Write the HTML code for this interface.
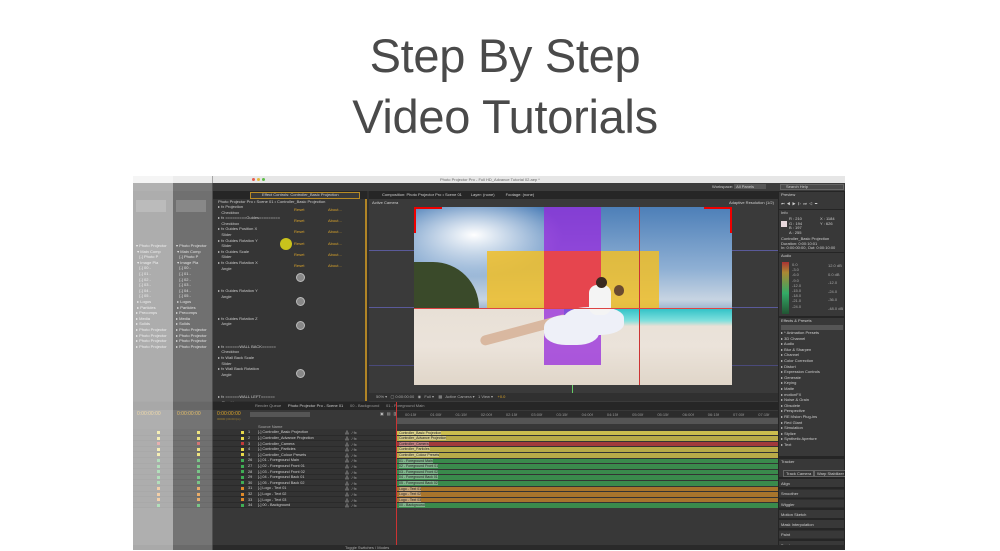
<!DOCTYPE html>
<html><head><meta charset="utf-8"><style>
*{margin:0;padding:0;box-sizing:border-box}
body{width:1000px;height:550px;background:#fff;position:relative;overflow:hidden;font-family:"Liberation Sans",sans-serif}
.a{position:absolute}
.t{font-size:4px;color:#cfcfcf;white-space:nowrap}
.o{color:#d9a32a}
h1{position:absolute;left:5px;width:1000px;text-align:center;font-weight:normal;color:#4a4a4a;font-size:47px;line-height:50px;letter-spacing:-0.3px}
</style></head><body>
<h1 style="top:31px">Step By Step</h1>
<h1 style="top:92px">Video Tutorials</h1>

<!-- window -->
<div class="a" style="left:133px;top:176px;width:712px;height:374px;background:#2f2f2f"></div>
<div class="a" style="left:133px;top:176px;width:712px;height:7px;background:#e6e6e6"></div>
<div class="a t" style="left:440px;top:177px;color:#666;font-size:4px">Photo Projector Pro - Full HD_Advance Tutorial 02.aep *</div>
<div class="a" style="left:133px;top:183px;width:712px;height:8px;background:#3c3c3c"></div>
<div class="a" style="left:252px;top:178px;width:3px;height:3px;border-radius:2px;background:#e65b4f"></div>
<div class="a" style="left:257px;top:178px;width:3px;height:3px;border-radius:2px;background:#e5b93c"></div>
<div class="a" style="left:262px;top:178px;width:3px;height:3px;border-radius:2px;background:#5cbc48"></div>
<div class="a t" style="left:712px;top:184px">Workspace: <span style="background:#555;padding:0 12px 0 2px">All Panels</span></div>
<div class="a" style="left:780px;top:184px;width:64px;height:6px;background:#4a4a4a;border:1px solid #666"></div>
<div class="a t" style="left:786px;top:184px">Search Help</div>

<!-- left project panels (ghosted) -->
<div class="a" style="left:133px;top:191px;width:80px;height:210px;background:#333"></div>
<div class="a t" style="left:136px;top:243px;line-height:5.6px;color:#ddd">▾ Photo Projector<br>&nbsp;▾ Main Comp<br>&nbsp;&nbsp;&nbsp;[-] Photo P<br>&nbsp;▾ Image Pla<br>&nbsp;&nbsp;&nbsp;[-] 00 -<br>&nbsp;&nbsp;&nbsp;[-] 01 -<br>&nbsp;&nbsp;&nbsp;[-] 02 -<br>&nbsp;&nbsp;&nbsp;[-] 03 -<br>&nbsp;&nbsp;&nbsp;[-] 04 -<br>&nbsp;&nbsp;&nbsp;[-] 05 -<br>&nbsp;▸ Logos<br>&nbsp;▸ Particles<br>▸ Precomps<br>▸ Media<br>▸ Solids<br>▸ Photo Projector<br>▸ Photo Projector<br>▸ Photo Projector<br>▸ Photo Projector</div>
<div class="a t" style="left:176px;top:243px;line-height:5.6px;color:#ddd">▾ Photo Projector<br>&nbsp;▾ Main Comp<br>&nbsp;&nbsp;&nbsp;[-] Photo P<br>&nbsp;▾ Image Pla<br>&nbsp;&nbsp;&nbsp;[-] 00 -<br>&nbsp;&nbsp;&nbsp;[-] 01 -<br>&nbsp;&nbsp;&nbsp;[-] 02 -<br>&nbsp;&nbsp;&nbsp;[-] 03 -<br>&nbsp;&nbsp;&nbsp;[-] 04 -<br>&nbsp;&nbsp;&nbsp;[-] 05 -<br>&nbsp;▸ Logos<br>&nbsp;▸ Particles<br>▸ Precomps<br>▸ Media<br>▸ Solids<br>▸ Photo Projector<br>▸ Photo Projector<br>▸ Photo Projector<br>▸ Photo Projector</div>
<div class="a" style="left:136px;top:200px;width:30px;height:12px;background:#555"></div>
<div class="a" style="left:176px;top:200px;width:30px;height:12px;background:#555"></div>
<!-- effect controls -->
<div class="a" style="left:213px;top:191px;width:154px;height:8px;background:#262626"></div>
<div class="a" style="left:250px;top:192px;width:110px;height:7px;background:#3a3a3a;border:1px solid #b88b24"></div>
<div class="a t" style="left:262px;top:192px">Effect Controls: Controller_Basic Projection</div>
<div class="a" style="left:213px;top:199px;width:154px;height:202px;background:#353535;border-right:2px solid #b08426"></div>
<div class="a t" style="left:218px;top:199px">Photo Projector Pro • Scene 01 • Controller_Basic Projection</div>
<div class="a" style="left:213px;top:204px;width:150px;height:197px;font-size:4px;line-height:5.6px;color:#ccc">
<div style="position:relative;padding-left:5px">
▸ fx Projection<br>&nbsp;&nbsp;&nbsp;Checkbox<br>▸ fx =========Guides=========<br>&nbsp;&nbsp;&nbsp;Checkbox<br>▸ fx Guides Position X<br>&nbsp;&nbsp;&nbsp;Slider<br>▸ fx Guides Rotation Y<br>&nbsp;&nbsp;&nbsp;Slider<br>▸ fx Guides Scale<br>&nbsp;&nbsp;&nbsp;Slider<br>▸ fx Guides Rotation X<br>&nbsp;&nbsp;&nbsp;Angle<br><br><br><br>▸ fx Guides Rotation Y<br>&nbsp;&nbsp;&nbsp;Angle<br><br><br><br>▸ fx Guides Rotation Z<br>&nbsp;&nbsp;&nbsp;Angle<br><br><br><br>▸ fx ======WALL BACK======<br>&nbsp;&nbsp;&nbsp;Checkbox<br>▸ fx Wall Back Scale<br>&nbsp;&nbsp;&nbsp;Slider<br>▸ fx Wall Back Rotation<br>&nbsp;&nbsp;&nbsp;Angle<br><br><br><br>▸ fx ======WALL LEFT======<br>&nbsp;&nbsp;&nbsp;Checkbox<br>▸ fx Wall Left Scale X<br>&nbsp;&nbsp;&nbsp;Slider
</div></div>
<div class="a t o" style="left:294px;top:204px;line-height:11.2px">Reset<br>Reset<br>Reset<br>Reset<br>Reset<br>Reset</div>
<div class="a t o" style="left:328px;top:204px;line-height:11.2px">About...<br>About...<br>About...<br>About...<br>About...<br>About...</div>
<div class="a" style="left:280px;top:238px;width:12px;height:12px;border-radius:6px;background:#d9d21a;opacity:.9"></div>
<div class="a" style="left:296px;top:273px;width:9px;height:9px;border-radius:5px;background:#888;border:1px solid #bbb"></div>
<div class="a" style="left:296px;top:297px;width:9px;height:9px;border-radius:5px;background:#888;border:1px solid #bbb"></div>
<div class="a" style="left:296px;top:321px;width:9px;height:9px;border-radius:5px;background:#888;border:1px solid #bbb"></div>
<div class="a" style="left:296px;top:369px;width:9px;height:9px;border-radius:5px;background:#888;border:1px solid #bbb"></div>

<!-- composition -->
<div class="a" style="left:369px;top:191px;width:409px;height:8px;background:#262626"></div>
<div class="a t" style="left:382px;top:192px">Composition: Photo Projector Pro • Scene 01 &nbsp;&nbsp;&nbsp;&nbsp;&nbsp;&nbsp; Layer: (none) &nbsp;&nbsp;&nbsp;&nbsp;&nbsp;&nbsp;&nbsp;&nbsp; Footage: (none)</div>
<div class="a" style="left:369px;top:199px;width:409px;height:203px;background:#3a3a3a"></div>
<div class="a t" style="left:372px;top:200px">Active Camera</div>
<div class="a t" style="left:729px;top:200px">Adaptive Resolution (1/2)</div>
<div class="a" style="left:369px;top:250px;width:409px;height:58px;border:1px solid #5a5a9a;border-left:none;border-right:none"></div>
<div class="a" style="left:369px;top:365px;width:409px;height:1px;background:#4a4a7a"></div>
<!-- photo -->
<div class="a" style="left:414px;top:207px;width:318px;height:178px;overflow:hidden;background:linear-gradient(#4d7fb8,#8fb0d4 35%,#c7d4e2 52%,#9fb6cf 57%)">
 <div class="a" style="left:0;top:0;width:150px;height:70px;background:radial-gradient(ellipse at 40% 40%,#fff,rgba(255,255,255,0) 70%)"></div>
 <div class="a" style="left:0;top:55px;width:65px;height:46px;background:#3a4a2a;border-radius:0 60px 0 0"></div>
 <div class="a" style="left:0;top:101px;width:318px;height:77px;background:linear-gradient(#e8e0d6,#ebe3da 50%,#e0d6c9)"></div>
 <div class="a" style="left:150px;top:101px;width:168px;height:18px;background:linear-gradient(#2cc0c6,#7fe0dd 70%,#e8e0d6)"></div>
 <div class="a" style="left:130px;top:0;width:57px;height:158px;background:rgba(150,40,220,.75)"></div>
 <div class="a" style="left:73px;top:44px;width:172px;height:57px;background:rgba(240,190,40,.85)"></div>
 <div class="a" style="left:130px;top:44px;width:57px;height:57px;background:rgba(230,50,80,.85)"></div>
 <div class="a" style="left:65px;top:118px;width:90px;height:10px;background:#d9b8a0;border-radius:5px;transform:rotate(-15deg)"></div>
 <div class="a" style="left:130px;top:108px;width:55px;height:30px;background:#eef0f8;border-radius:40%"></div>
 <div class="a" style="left:150px;top:100px;width:60px;height:28px;background:#eef0f8;border-radius:40%"></div>
 <div class="a" style="left:175px;top:78px;width:22px;height:30px;background:#f4f4f4;border-radius:8px"></div>
 <div class="a" style="left:182px;top:70px;width:11px;height:11px;background:#3a2a20;border-radius:6px"></div>
 <div class="a" style="left:200px;top:78px;width:10px;height:11px;background:#6a4a30;border-radius:6px"></div>
 <div class="a" style="left:225px;top:0;width:1px;height:178px;background:#c33"></div>
</div>
<div class="a" style="left:414px;top:207px;width:28px;height:2px;background:#e00"></div>
<div class="a" style="left:414px;top:207px;width:2px;height:26px;background:#e00"></div>
<div class="a" style="left:704px;top:207px;width:28px;height:2px;background:#e00"></div>
<div class="a" style="left:730px;top:207px;width:2px;height:26px;background:#e00"></div>
<div class="a" style="left:414px;top:308px;width:318px;height:1px;background:#d44"></div>
<div class="a" style="left:572px;top:385px;width:1px;height:12px;background:#6c6"></div>
<div class="a" style="left:369px;top:393px;width:409px;height:8px;background:#303030"></div>
<div class="a t" style="left:376px;top:394px;color:#aaa">50% ▾ &nbsp; ▢ 0:00:00:00 &nbsp; ◉ &nbsp; Full ▾ &nbsp;&nbsp; ▦ &nbsp; Active Camera ▾ &nbsp; 1 View ▾ &nbsp;&nbsp; <span class="o">+0.0</span></div>

<!-- right column -->
<div class="a" style="left:778px;top:191px;width:67px;height:359px;background:#252525"></div>
<div class="a" style="left:779px;top:192px;width:65px;height:17px;background:#383838"></div>
<div class="a t" style="left:781px;top:192px">Preview</div>
<div class="a t" style="left:781px;top:201px;letter-spacing:2px">⏮◀▶▷⏭◁▭</div>
<div class="a" style="left:779px;top:210px;width:65px;height:42px;background:#383838"></div>
<div class="a t" style="left:781px;top:210px">Info</div>
<div class="a" style="left:781px;top:221px;width:6px;height:6px;background:#e8d8dc"></div>
<div class="a t" style="left:789px;top:217px;line-height:4.5px">R : 210<br>G : 194<br>B : 197<br>A : 255</div>
<div class="a t" style="left:820px;top:217px;line-height:4.5px">X : 1184<br>Y : 626</div>
<div class="a t" style="left:781px;top:237px;line-height:4.5px">Controller_Basic Projection<br>Duration: 0:00:10:01<br>In: 0:00:00:00, Out: 0:00:10:00</div>
<div class="a" style="left:779px;top:253px;width:65px;height:63px;background:#383838"></div>
<div class="a t" style="left:781px;top:253px">Audio</div>
<div class="a" style="left:782px;top:262px;width:7px;height:52px;background:linear-gradient(#a33,#a83 20%,#3a6 60%,#253)"></div>
<div class="a t" style="left:792px;top:262px;line-height:5.2px;color:#aaa">0.0<br>-3.0<br>-6.0<br>-9.0<br>-12.0<br>-15.0<br>-18.0<br>-21.0<br>-24.0</div>
<div class="a t" style="left:828px;top:262px;line-height:8.5px;color:#aaa">12.0 dB<br>0.0 dB<br>-12.0<br>-24.0<br>-36.0<br>-48.0 dB</div>
<div class="a" style="left:779px;top:318px;width:65px;height:138px;background:#383838"></div>
<div class="a t" style="left:781px;top:318px">Effects &amp; Presets</div>
<div class="a" style="left:781px;top:325px;width:62px;height:5px;background:#555"></div>
<div class="a t" style="left:781px;top:330px;line-height:5.6px">▸ * Animation Presets<br>▸ 3D Channel<br>▸ Audio<br>▸ Blur &amp; Sharpen<br>▸ Channel<br>▸ Color Correction<br>▸ Distort<br>▸ Expression Controls<br>▸ Generate<br>▸ Keying<br>▸ Matte<br>▸ motionFX<br>▸ Noise &amp; Grain<br>▸ Obsolete<br>▸ Perspective<br>▸ RE:Vision Plug-ins<br>▸ Red Giant<br>▸ Simulation<br>▸ Stylize<br>▸ Synthetic Aperture<br>▸ Text</div>
<div class="a" style="left:779px;top:459px;width:65px;height:18px;background:#383838"></div>
<div class="a t" style="left:781px;top:459px">Tracker</div>
<div class="a t" style="left:783px;top:470px;border:1px solid #666;padding:0 2px">Track Camera</div>
<div class="a t" style="left:814px;top:470px;border:1px solid #666;padding:0 2px">Warp Stabilizer</div>
<div class="a" style="left:779px;top:479px;width:65px;height:71px;background:repeating-linear-gradient(#383838 0 8px,#252525 8px 10.3px)"></div>
<div class="a t" style="left:781px;top:479px;line-height:10.3px">Align<br>Smoother<br>Wiggler<br>Motion Sketch<br>Mask Interpolation<br>Paint<br>Brushes</div>

<!-- timeline -->
<div class="a" style="left:133px;top:402px;width:645px;height:8px;background:#262626"></div>
<div class="a t" style="left:255px;top:403px;color:#999">Render Queue &nbsp;&nbsp;&nbsp;&nbsp; <span style="color:#ccc">Photo Projector Pro - Scene 01</span> &nbsp;&nbsp;&nbsp;&nbsp; 00 - Background &nbsp;&nbsp;&nbsp;&nbsp; 01 - Foreground Main</div>
<div class="a" style="left:133px;top:410px;width:645px;height:140px;background:#383838"></div>
<div class="a t o" style="left:137px;top:411px;font-size:5px">0:00:00:00</div>
<div class="a t o" style="left:177px;top:411px;font-size:5px">0:00:00:00</div>
<div class="a t o" style="left:217px;top:411px;font-size:5px">0:00:00:00</div>
<div class="a t" style="left:217px;top:417px;color:#a08030;font-size:3px">00000 (30.00 fps)</div>
<div class="a" style="left:250px;top:412px;width:60px;height:5px;background:#555"></div>
<div class="a t" style="left:380px;top:411px;letter-spacing:3px;color:#bbb">▣▤▥◉</div>
<div class="a" style="left:396px;top:411px;width:382px;height:6px;background:#2c2c2c"></div>
<div class="a t" style="left:405px;top:412px;color:#999;word-spacing:13px">00:15f 01:00f 01:15f 02:00f 02:15f 03:00f 03:15f 04:00f 04:15f 05:00f 05:15f 06:00f 06:15f 07:00f 07:15f</div>
<div class="a" style="left:396px;top:418px;width:382px;height:6px;background:#555"></div>
<div class="a t" style="left:258px;top:424px;color:#aaa">Source Name</div>
<div class="a" style="left:133px;top:429px;width:645px;height:78px;background:#333"></div>
<div id="rows"></div>
<div class="a" style="left:396px;top:402px;width:1px;height:148px;background:#c33"></div>
<div class="a" style="left:133px;top:545px;width:712px;height:5px;background:#2a2a2a"></div>
<div class="a t" style="left:345px;top:545px;color:#aaa">Toggle Switches / Modes</div>

<!-- ghost windows overlay -->
<div class="a" style="left:133px;top:176px;width:40px;height:374px;background:rgba(255,255,255,.6)"></div>
<div class="a" style="left:173px;top:176px;width:40px;height:374px;background:rgba(255,255,255,.3)"></div>
<div class="a" style="left:212px;top:176px;width:1px;height:374px;background:rgba(0,0,0,.3)"></div>
<div class="a" style="left:845px;top:176px;width:155px;height:374px;background:#fff"></div>

<script>
var names=["[-] Controller_Basic Projection","[-] Controller_Advance Projection","[-] Controller_Camera","[-] Controller_Particles","[-] Controller_Colour Presets","[-] 01 - Foreground Main","[-] 02 - Foreground Front 01","[-] 03 - Foreground Front 02","[-] 04 - Foreground Back 01","[-] 05 - Foreground Back 02","[-] Logo - Text 01","[-] Logo - Text 02","[-] Logo - Text 03","[-] 00 - Background"];
var nums=[1,2,3,4,5,26,27,28,29,30,31,32,33,34];
var lab=["#e8d84a","#e8d84a","#c23a3a","#e8d84a","#e8d84a","#3fae55","#3fae55","#3fae55","#3fae55","#3fae55","#e08a2a","#e08a2a","#e08a2a","#3fae55"];
var bar=["#cbbd4e","#b8aa48","#a2393b","#b8aa48","#b8aa48","#3a8a4c","#3a8a4c","#3a8a4c","#3a8a4c","#3a8a4c","#a7742c","#a7742c","#a7742c","#3a8a4c"];
var h="";
for(var i=0;i<14;i++){var y=430+i*5.6;
h+='<div class="a" style="left:133px;top:'+y+'px;width:263px;height:5.6px;border-bottom:1px solid #2a2a2a"></div>';
h+='<div class="a" style="left:157px;top:'+(y+1)+'px;width:3px;height:3px;background:'+lab[i]+'"></div>';
h+='<div class="a" style="left:197px;top:'+(y+1)+'px;width:3px;height:3px;background:'+lab[i]+'"></div>';
h+='<div class="a" style="left:241px;top:'+(y+1)+'px;width:3px;height:3px;background:'+lab[i]+'"></div>';
h+='<div class="a t" style="left:248px;top:'+(y+0.3)+'px;font-size:3.8px">'+nums[i]+'</div>';
h+='<div class="a t" style="left:258px;top:'+(y+0.3)+'px;font-size:3.8px">'+names[i]+'</div>';
h+='<div class="a t" style="left:345px;top:'+(y+0.3)+'px;font-size:3.8px;color:#aaa">⁂ &nbsp; ⁄ fx</div>';
h+='<div class="a" style="left:397px;top:'+(y+0.5)+'px;width:381px;height:4.8px;background:'+bar[i]+'"></div>';
h+='<div class="a t" style="left:399px;top:'+(y+0.6)+'px;font-size:3.5px;color:#222;background:rgba(255,255,255,.35)">'+names[i].slice(4)+'</div>';}
document.getElementById("rows").innerHTML=h;
</script>
</body></html>
